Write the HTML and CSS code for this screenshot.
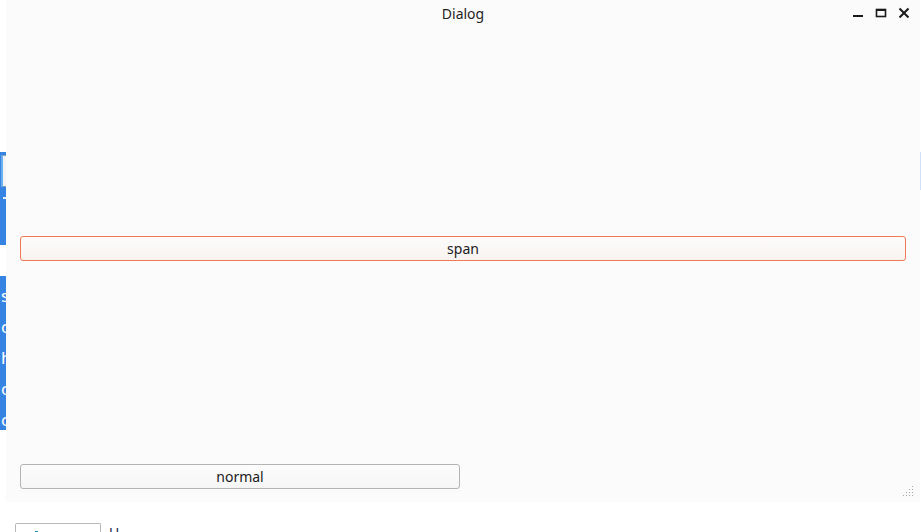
FILE: index.html
```html
<!DOCTYPE html>
<html>
<head>
<meta charset="utf-8">
<link rel="stylesheet" href="styles.css">
</head>
<body>
<div class="desktop">
  <div class="side-blue top-block"><div class="inner-panel"></div><div class="tick"></div></div>
  <div class="side-blue text-block">
    <span>s</span><span>c</span><span>h</span><span>c</span><span>c</span>
  </div>
  <div class="right-edge"></div>
  <div class="bottom-bar">
    <div class="tool-btn">
      <svg width="87" height="12" viewBox="0 0 87 12">
        <rect x="19" y="7" width="3" height="6" fill="#1f8fb0"/>
        <rect x="17" y="10" width="7" height="3" fill="#2a7fd0"/>
        <rect x="43" y="8" width="9" height="5" fill="#2a70d0"/>
      </svg>
    </div>
    <span class="bottom-text">U</span>
  </div>

  <div class="dialog">
    <div class="titlebar">
      <span class="title">Dialog</span>
      <div class="controls">
        <svg class="ctl" width="12" height="12" viewBox="0 0 12 12"><rect x="1" y="8" width="10" height="2" fill="#1a1a1a"/></svg>
        <svg class="ctl" width="12" height="12" viewBox="0 0 12 12"><rect x="1.5" y="2.5" width="9" height="7" fill="none" stroke="#1a1a1a" stroke-width="1.6"/><rect x="1" y="2" width="10" height="2" fill="#1a1a1a"/></svg>
        <svg class="ctl" width="12" height="12" viewBox="0 0 12 12"><path d="M1.5 1.5 L10.5 10.5 M10.5 1.5 L1.5 10.5" stroke="#1a1a1a" stroke-width="2"/></svg>
      </div>
    </div>
    <div class="content">
      <button class="btn btn-span">span</button>
      <button class="btn btn-normal">normal</button>
    </div>
    <svg class="grip" width="12" height="12" viewBox="0 0 12 12">
      <g fill="#a6a6a6">
        <rect x="9" y="0" width="1" height="1"/>
        <rect x="6" y="3" width="1" height="1"/><rect x="9" y="3" width="1" height="1"/>
        <rect x="3" y="6" width="1" height="1"/><rect x="6" y="6" width="1" height="1"/><rect x="9" y="6" width="1" height="1"/>
        <rect x="0" y="9" width="1" height="1"/><rect x="3" y="9" width="1" height="1"/><rect x="6" y="9" width="1" height="1"/><rect x="9" y="9" width="1" height="1"/>
      </g>
    </svg>
  </div>
</div>
</body>
</html>
```

FILE: styles.css
```css
html, body {
  margin: 0;
  padding: 0;
  background: #ffffff;
  width: 921px;
  height: 532px;
  overflow: hidden;
  font-family: "Noto Sans", "DejaVu Sans", sans-serif;
}

.desktop {
  position: relative;
  width: 921px;
  height: 532px;
  overflow: hidden;
}

.side-blue {
  position: absolute;
  left: 0;
  width: 6px;
  background: #3584e4;
  overflow: hidden;
}

.top-block {
  top: 152px;
  height: 93px;
}

.inner-panel {
  margin-top: 3px;
  margin-left: 1px;
  width: 8px;
  height: 30px;
  background: #f4f4f4;
  border: 1px solid #8aa0b8;
  border-left: 2px solid #6ab0f0;
}

.tick {
  margin-top: 10px;
  margin-left: 3px;
  width: 4px;
  height: 2px;
  background: #e8f0ff;
}

.text-block {
  top: 276px;
  height: 154px;
  display: flex;
  flex-direction: column;
  padding-top: 8px;
  box-sizing: border-box;
  gap: 7px;
}

.text-block span {
  color: #ffffff;
  font-size: 17px;
  line-height: 24px;
  margin-left: 1px;
}

.right-edge {
  position: absolute;
  left: 920px;
  top: 152px;
  width: 1px;
  height: 38px;
  background: #cfe0f8;
}

.bottom-bar {
  position: absolute;
  left: 15px;
  top: 523px;
  display: flex;
  align-items: flex-start;
  gap: 8px;
}

.tool-btn {
  width: 86px;
  height: 14px;
  border: 1px solid #b8b8b8;
  border-bottom: none;
  background: #ffffff;
  box-sizing: border-box;
  border-radius: 2px 2px 0 0;
}

.tool-btn svg {
  display: block;
}

.bottom-text {
  color: #1a2a50;
  font-size: 14px;
  line-height: 14px;
  margin-top: 3px;
}

.dialog {
  position: absolute;
  left: 6px;
  top: 0;
  width: 914px;
  height: 502px;
  background: #fbfbfb;
  display: flex;
  flex-direction: column;
}

.titlebar {
  height: 27px;
  position: relative;
  display: flex;
  align-items: center;
  justify-content: center;
  flex-shrink: 0;
}

.title {
  font-size: 14px;
  color: #1f1f1f;
  margin-left: 0px;
  margin-top: -1px;
}

.controls {
  position: absolute;
  right: 10px;
  top: 7px;
  display: flex;
  gap: 11px;
}

.ctl {
  display: block;
}

.content {
  flex: 1;
  display: flex;
  flex-direction: column;
  justify-content: space-between;
  padding: 209px 14px 13px 14px;
}

.btn {
  height: 25px;
  font-family: "Noto Sans", "DejaVu Sans", sans-serif;
  font-size: 14px;
  color: #1a1a1a;
  border-radius: 3px;
  padding: 0;
  line-height: 22px;
}

.btn-span {
  width: 886px;
  border: 1px solid #f07a55;
  background: linear-gradient(#fdfcfb, #f8f3f1);
}

.btn-normal {
  width: 440px;
  border: 1px solid #b4b4b4;
  background: linear-gradient(#fcfcfc, #f6f6f6);
}

.grip {
  position: absolute;
  right: 5px;
  bottom: 4px;
  display: block;
}
```
